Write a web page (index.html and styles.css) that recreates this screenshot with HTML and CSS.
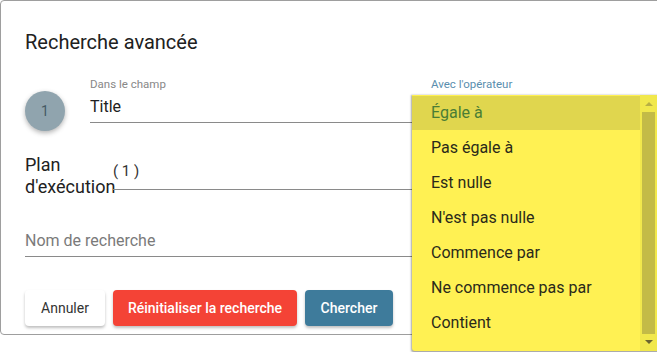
FILE: index.html
```html
<!DOCTYPE html>
<html lang="fr">
<head>
  <meta charset="UTF-8">
  <title>Recherche avancée</title>
  <link rel="stylesheet" href="styles.css">
</head>
<body>
  <div class="dialog">
    <h2 class="title">Recherche avancée</h2>

    <div class="row first">
      <div class="step">1</div>
      <div class="field field-wide">
        <label class="field-label">Dans le champ</label>
        <div class="field-value">Title</div>
      </div>
      <div class="field field-op">
        <label class="field-label op-label">Avec l'opérateur</label>
        <div class="field-value"></div>
      </div>
    </div>

    <div class="row plan">
      <div class="plan-label">Plan<br>d'exécution</div>
      <div class="field plan-field">
        <div class="field-value">( 1 )</div>
      </div>
    </div>

    <div class="field name-field">
      <div class="field-value placeholder">Nom de recherche</div>
    </div>

    <div class="actions">
      <button class="btn btn-cancel">Annuler</button>
      <button class="btn btn-reset">Réinitialiser la recherche</button>
      <button class="btn btn-search">Chercher</button>
    </div>
  </div>

  <div class="dropdown">
    <ul class="options">
      <li class="active">Égale à</li>
      <li>Pas égale à</li>
      <li>Est nulle</li>
      <li>N'est pas nulle</li>
      <li>Commence par</li>
      <li>Ne commence pas par</li>
      <li>Contient</li>
    </ul>
    <div class="scrollbar">
      <span class="arrow up"></span>
      <div class="thumb"></div>
      <span class="arrow down"></span>
    </div>
  </div>
</body>
</html>
```

FILE: styles.css
```css
body {
  margin: 0;
  background: #fff;
  font-family: Roboto, "Liberation Sans", Arial, sans-serif;
  color: #212121;
  overflow: hidden;
  height: 352px;
  position: relative;
}
.dialog {
  width: 760px;
  height: 335px;
  box-sizing: border-box;
  border: 1px solid #9e9e9e;
  border-radius: 4px;
  padding: 29px 24px 0 24px;
  background: #fff;
}
.title {
  margin: 0;
  font-size: 20px;
  font-weight: 400;
  line-height: 24px;
  color: #212121;
}
.row {
  display: flex;
  align-items: flex-end;
}
.row.first {
  margin-top: 23px;
}
.step {
  width: 40px;
  height: 40px;
  border-radius: 50%;
  background: #90a4ae;
  color: #455a64;
  font-size: 14px;
  display: flex;
  align-items: center;
  justify-content: center;
  box-shadow: 0 2px 5px rgba(0, 0, 0, 0.3);
  margin-right: 25px;
  margin-bottom: -8px;
}
.field {
  border-bottom: 1px solid #8a8a8a;
}
.field-wide {
  width: 322px;
}
.field-op {
  width: 300px;
  margin-left: 19px;
}
.field-label {
  display: block;
  font-size: 11.5px;
  color: #888;
  line-height: 14px;
}
.op-label {
  color: #5a8eae;
}
.field-value {
  font-size: 16px;
  line-height: 20px;
  height: 20px;
  padding: 4px 0 5px;
}
.first .field-value {
  padding-top: 6px;
}
.plan {
  margin-top: 31px;
  align-items: flex-start;
}
.plan-label {
  font-size: 18px;
  line-height: 22px;
  width: 88px;
  white-space: nowrap;
  color: #212121;
}
.plan-field {
  width: 600px;
  height: 36px;
  box-sizing: border-box;
}
.plan-field .field-value {
  padding-top: 7px;
  font-size: 15px;
  color: #333;
}
.name-field {
  margin-top: 29px;
  width: 700px;
}
.placeholder {
  color: #7a7a7a;
}
.actions {
  display: flex;
  gap: 8px;
  margin-top: 33px;
}
.btn {
  height: 36px;
  border: none;
  border-radius: 4px;
  font-family: Roboto, "Liberation Sans", Arial, sans-serif;
  font-size: 14px;
  padding: 0 6px;
  white-space: nowrap;
  box-shadow: 0 2px 3px rgba(0, 0, 0, 0.25);
}
.btn-cancel {
  background: #fff;
  color: #333;
  width: 80px;
}
.btn-reset {
  background: #f44336;
  color: #fff;
  font-weight: 500;
  width: 184px;
}
.btn-search {
  background: #3e7b9b;
  color: #fff;
  font-weight: 500;
  width: 88px;
}
.dropdown {
  position: absolute;
  left: 412px;
  top: 95px;
  width: 250px;
  height: 256px;
  background: #fff153;
  display: flex;
  box-shadow: 0 1px 2px 1px rgba(0, 0, 0, 0.35);
  border-radius: 0 0 0 3px;
}
.options {
  list-style: none;
  margin: 0;
  padding: 1px 0 0;
  flex: 1;
}
.options li {
  height: 35px;
  line-height: 35px;
  padding-left: 19px;
  font-size: 16px;
  color: #2a2a1a;
}
.options li.active {
  background: #e0d64e;
  color: #4a7d35;
  height: 34px;
  line-height: 34px;
}
.scrollbar {
  width: 17px;
  background: #f1e84c;
  display: flex;
  flex-direction: column;
  align-items: center;
  margin-right: 5px;
}
.thumb {
  width: 13px;
  flex: 1;
  background: #c3bb47;
  margin: 6px 0;
}
.arrow {
  width: 0;
  height: 0;
  border-left: 4px solid transparent;
  border-right: 4px solid transparent;
  margin-top: 7px;
}
.arrow.up {
  border-bottom: 4px solid #b8b044;
}
.arrow.down {
  border-top: 4px solid #6b6530;
  margin: 0 0 7px;
}
```
